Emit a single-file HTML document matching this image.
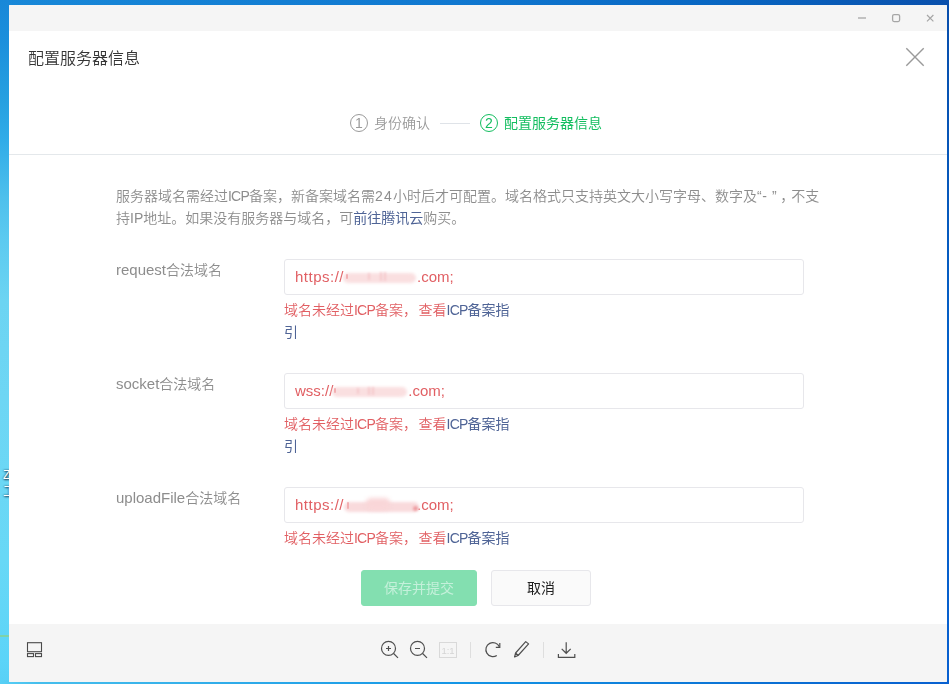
<!DOCTYPE html>
<html lang="zh-CN">
<head>
<meta charset="utf-8">
<title>配置服务器信息</title>
<style>
*{box-sizing:border-box;margin:0;padding:0}
html,body{width:949px;height:684px;overflow:hidden}
body{font-family:"Liberation Sans","Noto Sans CJK SC",sans-serif;font-size:14px;color:#8d8d8d;position:relative;font-weight:350;
background:linear-gradient(90deg,#1888d8 0,#1078d0 48%,#0866c2 76%,#0a50ac 100%);}
.desk-left{position:absolute;left:0;top:0;width:12px;height:684px;background:linear-gradient(180deg,#1888d8 0,#1b8fdc 5.8%,#26a0e0 14.6%,#30ace8 20.5%,#4ec0ec 29%,#5ccaf0 35%,#6cd4f2 44%,#6ed6f4 58%,#68d8f6 82%,#5cd4f8 96.5%,#58d0f6 100%)}
.desk-right{position:absolute;left:945px;top:4px;width:4px;height:680px;background:linear-gradient(180deg,#084eac 0,#0460c8 50%,#0860d0 100%)}
.desk-bottom{position:absolute;left:0;top:680px;width:949px;height:4px;background:linear-gradient(90deg,#58d0f6 0,#46beec 4%,#1496e6 48%,#0a70d4 80%,#0860d0 100%)}
.win{will-change:transform;position:absolute;left:9px;top:5px;width:938px;height:677px;background:#fff;overflow:hidden;border-radius:1px}
.tbar{position:absolute;left:0;top:0;width:938px;height:26px;background:#f5f5f5}
.foot{position:absolute;left:0;top:619px;width:938px;height:58px;background:#f5f5f5}
.abs{position:absolute;white-space:nowrap}
.title{left:19px;top:42px;font-size:16px;line-height:24px;color:#353535}
.hr{position:absolute;left:0;top:149px;width:938px;height:1px;background:#e4e8eb}
.step{font-size:14px;line-height:20px}
.circ{position:absolute;width:18px;height:18px;border-radius:50%;border:1px solid #9a9a9a;font-size:14px;line-height:16px;text-align:center}
.desc{left:107px;top:180px;line-height:22px;font-size:14px;color:#8d8d8d;white-space:normal;width:720px}
a{color:#4f6496;text-decoration:none;font-weight:400}
.label{left:107px;font-size:14px;line-height:20px;color:#8d8d8d}
.input{position:absolute;left:275px;width:520px;height:36px;border:1px solid #e7e7eb;border-radius:3px;background:#fff;color:#e15f63;font-size:14px;line-height:34px;padding-left:10px;white-space:nowrap}
.err{left:275px;width:232px;white-space:normal;color:#e15f63;font-size:14px;line-height:22px}
.icp{letter-spacing:-.77px}
.lt{font-size:15px}
.hp{font-size:15px;letter-spacing:.5px}
.sm{display:inline-block;position:relative;height:14px;vertical-align:middle}
.sm i{position:absolute;display:block;background:#fadfe0;filter:blur(1.5px);border-radius:5px}
.blur{position:absolute;background:#fbe3e4;filter:blur(2px);border-radius:4px}
.btn{position:absolute;top:565px;height:36px;border-radius:3px;font-size:14px;line-height:34px;text-align:center}
.btn.p{left:352px;width:116px;background:#83dfb0;border:1px solid #83dfb0;color:#c4f0da;font-weight:400}
.btn.d{left:482px;width:100px;background:#fafafa;border:1px solid #e7e7eb;color:#222;font-weight:400}
</style>
</head>
<body>
<div class="desk-left"></div>
<div class="desk-right"></div>
<div class="desk-bottom"></div>
<div class="abs" style="left:3px;top:467px;font-size:12px;line-height:16px;color:#fff;font-weight:400;text-shadow:1px 1px 2px #1a3a55,0 0 2px #1a3a55">Z</div>
<div class="abs" style="left:3px;top:483px;font-size:13px;line-height:16px;color:#fff;font-weight:400;text-shadow:1px 1px 2px #1a3a55,0 0 2px #1a3a55">工</div>
<div class="abs" style="left:0;top:635px;width:9px;height:2px;background:#7fd2a8"></div>
<div class="win">
  <div class="tbar"></div>
  <div class="abs title">配置服务器信息</div>

  <div class="circ" style="left:341px;top:109px;color:#9a9a9a">1</div>
  <div class="abs step" style="left:365px;top:108px;color:#9a9a9a">身份确认</div>
  <div class="abs" style="left:431px;top:118px;width:30px;height:1px;background:#dfe3e8"></div>
  <div class="circ" style="left:471px;top:109px;color:#14be60;border-color:#14be60">2</div>
  <div class="abs step" style="left:495px;top:108px;color:#14be60;font-weight:400">配置服务器信息</div>
  <div class="hr"></div>

  <div class="abs desc"><span id="d1">服务器域名需经过</span><span class="icp">ICP</span>备案，<span id="d2">新</span>备案域名需<span style="letter-spacing:1.2px">24</span><span id="d3">小</span>时后才可配置。<span id="d4">域</span>名格式只支持英文大小写字母、数字及<span style="letter-spacing:.6px">“-&nbsp;”</span><span style="margin-left:3px;margin-right:-3px">，</span>不<span id="d5">支</span><br>持IP地址。如果没有服务器与域名，可<a id="d6">前往腾讯云</a>购<span id="d7">买</span>。</div>

  <div class="abs label" style="top:255px"><span class="lt">request</span>合法域名</div>
  <div class="input" style="top:254px"><span class="hp">https://</span><span class="sm" style="width:73px"><i style="left:-1px;top:2px;width:73px;height:10px"></i><i style="left:2px;top:3px;width:2px;height:5px;background:#f2b0b3;filter:blur(.7px)"></i><i style="left:24px;top:2px;width:2px;height:7px;background:#f6c9cb;filter:blur(1px)"></i><i style="left:36px;top:1px;width:2px;height:9px;background:#f6c9cb;filter:blur(1px)"></i><i style="left:40px;top:1px;width:2px;height:9px;background:#f6c9cb;filter:blur(1px)"></i></span><span class="lt cm">.com;</span></div>
  <div class="abs err" style="top:294px">域名未经过<span class="icp">ICP</span>备案<span style="letter-spacing:1.5px">，</span>查看<a><span class="icp">ICP</span>备案指引</a></div>

  <div class="abs label" style="top:369px"><span class="lt">socket</span>合法域名</div>
  <div class="input" style="top:368px"><span class="hp" style="letter-spacing:0">wss://</span><span class="sm" style="width:75px"><i style="left:-1px;top:2px;width:75px;height:10px"></i><i style="left:1px;top:3px;width:2px;height:5px;background:#f2b0b3;filter:blur(.7px)"></i><i style="left:24px;top:3px;width:2px;height:6px;background:#f6c9cb;filter:blur(1px)"></i><i style="left:35px;top:2px;width:2px;height:8px;background:#f6c9cb;filter:blur(1px)"></i><i style="left:39px;top:2px;width:2px;height:8px;background:#f6c9cb;filter:blur(1px)"></i></span><span class="lt cm">.com;</span></div>
  <div class="abs err" style="top:408px">域名未经过<span class="icp">ICP</span>备案<span style="letter-spacing:1.5px">，</span>查看<a><span class="icp">ICP</span>备案指引</a></div>

  <div class="abs label" style="top:483px"><span class="lt">uploadFile</span>合法域名</div>
  <div class="input" style="top:482px"><span class="hp">https://</span><span class="sm" style="width:73px"><i style="left:0px;top:3px;width:75px;height:10px;background:#f9dadc"></i><i style="left:22px;top:-1px;width:24px;height:12px;background:#f9d6d8;filter:blur(2px)"></i><i style="left:3px;top:3px;width:2px;height:7px;background:#f2b0b3;filter:blur(.7px)"></i><i style="left:69px;top:7px;width:5px;height:5px;background:#ee9ea2;filter:blur(.8px)"></i></span><span class="lt cm">.com;</span></div>
  <div class="abs err" style="top:522px;height:22px;overflow:hidden">域名未经过<span class="icp">ICP</span>备案<span style="letter-spacing:1.5px">，</span>查看<a><span class="icp">ICP</span>备案指引</a></div>

  <div class="btn p">保存并提交</div>
  <div class="btn d">取消</div>

  <div class="foot"></div>
</div>

<svg class="ov" width="949" height="684" viewBox="0 0 949 684" style="position:absolute;left:0;top:0" fill="none" stroke-linecap="butt">
  <!-- window controls -->
  <g stroke="#a6a6a6" stroke-width="1.3">
    <path d="M858 18h8"/>
    <rect x="892.6" y="14.6" width="7" height="7" rx="1.5"/>
    <path d="M927 15l6.4 6.4M933.4 15l-6.4 6.4" stroke-width="1.2"/>
  </g>
  <!-- dialog close -->
  <path d="M906.3 48.3l17.4 17.4M923.7 48.3l-17.4 17.4" stroke="#9a9a9a" stroke-width="1.4"/>
  <!-- footer left icon -->
  <g stroke="#4a4a4a" stroke-width="1.1">
    <rect x="27.5" y="642.7" width="14" height="9"/>
    <rect x="27.5" y="653.6" width="6" height="3"/>
    <rect x="35.5" y="653.6" width="6" height="3"/>
  </g>
  <!-- footer center icons -->
  <g stroke="#4f4f4f" stroke-width="1.2">
    <circle cx="388.5" cy="648.4" r="7"/>
    <path d="M393.6 653.5l4.4 4.4M386 648.5h5M388.5 646v5"/>
    <circle cx="417.5" cy="648.4" r="7"/>
    <path d="M422.6 653.5l4.4 4.4M415 648.5h5"/>
    <path d="M496.8 655.4A7 7 0 1 1 499.3 646.8"/>
    <path d="M499.8 643v4.3h-4"/>
    <path d="M514.6 657l1-4 10.1-11.4 2.9 2.3-10.5 11.6zM515.6 653l2.5 2.5" stroke-linejoin="round"/>
    <path d="M566.2 642.2v10.6M561.7 648.9l4.5 4.4 4.5-4.4M558.4 654v3.4h16.4v-3.4"/>
  </g>
  <g stroke="#dedede" stroke-width="1">
    <path d="M470.5 642v16M543.5 642v16"/>
    <rect x="439.5" y="642.5" width="17" height="15" stroke="#d9d9d9"/>
  </g>
  <text x="448" y="654" font-family="Liberation Sans, sans-serif" font-size="9.5" fill="#d4d4d4" stroke="none" text-anchor="middle">1:1</text>
</svg>
</body>
</html>
